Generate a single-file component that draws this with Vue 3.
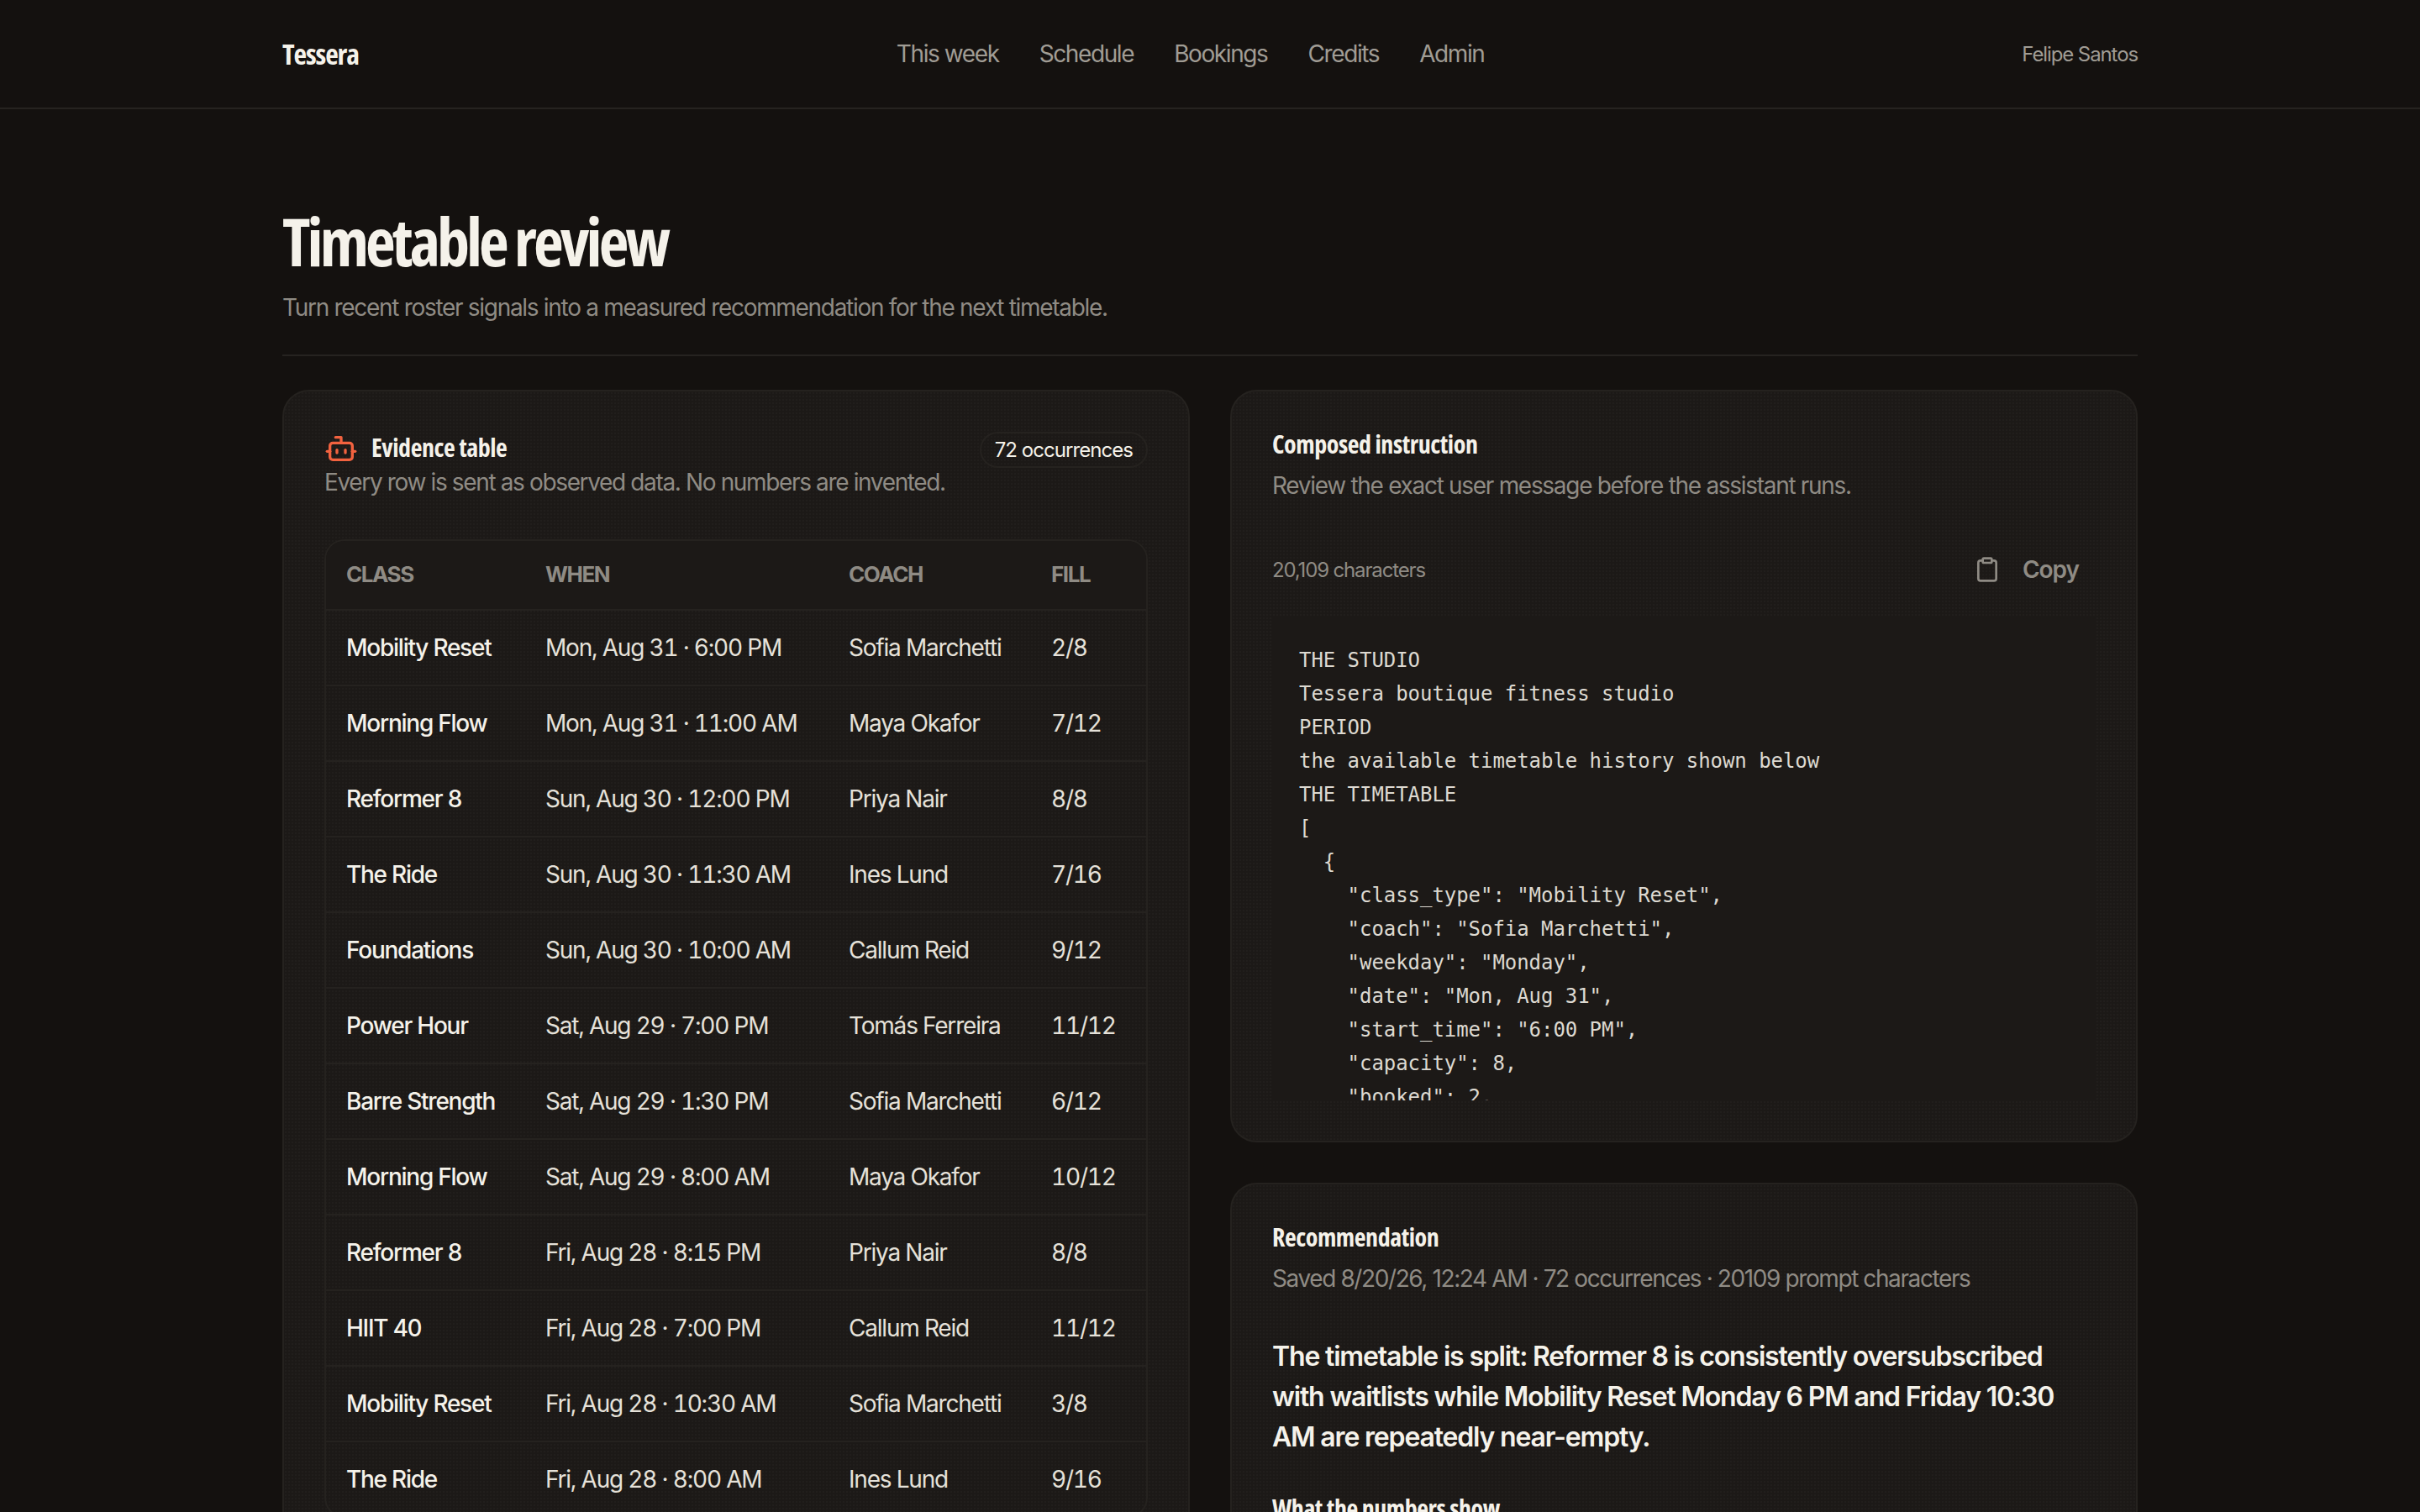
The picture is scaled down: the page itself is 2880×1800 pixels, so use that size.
<script setup>
const navItems = ['This week', 'Schedule', 'Bookings', 'Credits', 'Admin']

const rows = [
  ['Mobility Reset', 'Mon, Aug 31 · 6:00 PM', 'Sofia Marchetti', '2/8'],
  ['Morning Flow', 'Mon, Aug 31 · 11:00 AM', 'Maya Okafor', '7/12'],
  ['Reformer 8', 'Sun, Aug 30 · 12:00 PM', 'Priya Nair', '8/8'],
  ['The Ride', 'Sun, Aug 30 · 11:30 AM', 'Ines Lund', '7/16'],
  ['Foundations', 'Sun, Aug 30 · 10:00 AM', 'Callum Reid', '9/12'],
  ['Power Hour', 'Sat, Aug 29 · 7:00 PM', 'Tomás Ferreira', '11/12'],
  ['Barre Strength', 'Sat, Aug 29 · 1:30 PM', 'Sofia Marchetti', '6/12'],
  ['Morning Flow', 'Sat, Aug 29 · 8:00 AM', 'Maya Okafor', '10/12'],
  ['Reformer 8', 'Fri, Aug 28 · 8:15 PM', 'Priya Nair', '8/8'],
  ['HIIT 40', 'Fri, Aug 28 · 7:00 PM', 'Callum Reid', '11/12'],
  ['Mobility Reset', 'Fri, Aug 28 · 10:30 AM', 'Sofia Marchetti', '3/8'],
  ['The Ride', 'Fri, Aug 28 · 8:00 AM', 'Ines Lund', '9/16'],
]

const prompt = `THE STUDIO
Tessera boutique fitness studio
PERIOD
the available timetable history shown below
THE TIMETABLE
[
  {
    "class_type": "Mobility Reset",
    "coach": "Sofia Marchetti",
    "weekday": "Monday",
    "date": "Mon, Aug 31",
    "start_time": "6:00 PM",
    "capacity": 8,
    "booked": 2,
    "waitlist": 0
  },`
</script>

<template>
  <div class="page">
    <header class="topbar">
      <div class="topbar-inner">
        <div class="brand">Tessera</div>
        <nav class="nav">
          <a v-for="item in navItems" :key="item">{{ item }}</a>
        </nav>
        <div class="user">Felipe Santos</div>
      </div>
    </header>

    <main class="main">
      <div class="head">
        <h1>Timetable review</h1>
        <p>Turn recent roster signals into a measured recommendation for the next timetable.</p>
      </div>

      <div class="columns">
        <section class="card">
          <div class="evidence-head">
            <div>
              <h2 class="with-icon">
                <svg class="bot" width="40" height="40" viewBox="0 0 24 24" fill="none" stroke="#f2623f" stroke-width="2" stroke-linecap="round" stroke-linejoin="round">
                  <path d="M12 8V4H8" />
                  <rect x="4" y="8" width="16" height="12" rx="2" />
                  <path d="M2 14h2" />
                  <path d="M20 14h2" />
                  <path d="M15 13v2" />
                  <path d="M9 13v2" />
                </svg>
                <span>Evidence table</span>
              </h2>
              <p class="sub tight">Every row is sent as observed data. No numbers are invented.</p>
            </div>
            <span class="pill">72 occurrences</span>
          </div>

          <div class="table-wrap">
            <table>
              <colgroup>
                <col style="width: 237px">
                <col style="width: 361px">
                <col style="width: 241px">
                <col>
              </colgroup>
              <thead>
                <tr><th>CLASS</th><th>WHEN</th><th>COACH</th><th>FILL</th></tr>
              </thead>
              <tbody>
                <tr v-for="(r, i) in rows" :key="i">
                  <td class="cls">{{ r[0] }}</td>
                  <td>{{ r[1] }}</td>
                  <td>{{ r[2] }}</td>
                  <td>{{ r[3] }}</td>
                </tr>
              </tbody>
            </table>
          </div>
        </section>

        <div class="stack">
          <section class="card">
            <h2>Composed instruction</h2>
            <p class="sub">Review the exact user message before the assistant runs.</p>
            <div class="prompt-bar">
              <span class="count">20,109 characters</span>
              <button class="copy">
                <svg width="32" height="32" viewBox="0 0 24 24" fill="none" stroke="currentColor" stroke-width="2" stroke-linecap="round" stroke-linejoin="round">
                  <rect x="8" y="2" width="8" height="4" rx="1" />
                  <path d="M16 4h2a2 2 0 0 1 2 2v14a2 2 0 0 1-2 2H6a2 2 0 0 1-2-2V6a2 2 0 0 1 2-2h2" />
                </svg>
                Copy
              </button>
            </div>
            <pre class="prompt">{{ prompt }}</pre>
          </section>

          <section class="card">
            <h2>Recommendation</h2>
            <p class="sub saved">Saved 8/20/26, 12:24 AM · 72 occurrences · 20109 prompt characters</p>
            <p class="verdict">The timetable is split: Reformer 8 is consistently oversubscribed with waitlists while Mobility Reset Monday 6 PM and Friday 10:30 AM are repeatedly near-empty.</p>
            <h3>What the numbers show</h3>
          </section>
        </div>
      </div>
    </main>
  </div>
</template>

<style>
html, body {
  margin: 0;
  background: #14110f;
}
</style>

<style scoped>
.page {
  height: 100vh;
  overflow: hidden;
  background: #14110f;
  color: #f5f2ea;
  font-family: Inter, "Liberation Sans", sans-serif;
}
.topbar {
  height: 128px;
  border-bottom: 2px solid #262320;
}
.topbar-inner {
  width: 2208px;
  height: 100%;
  margin: 0 auto;
  display: flex;
  justify-content: space-between;
  align-items: center;
}
.brand {
  font-family: "Open Sans", sans-serif;
  font-stretch: 75%;
  font-weight: 700;
  font-size: 34px;
  letter-spacing: -1.1px;
}
.nav {
  display: flex;
  gap: 48px;
}
.nav a {
  font-size: 28px;
  color: #a09c94;
  letter-spacing: -1.4px;
}
.user {
  font-size: 24px;
  color: #a09c94;
  letter-spacing: -1.1px;
}
.main {
  width: 2208px;
  margin: 0 auto;
  padding-top: 116px;
}
.head {
  padding-bottom: 36px;
  border-bottom: 2px solid #262320;
  margin-bottom: 40px;
}
h1 {
  margin: 0;
  font-family: "Open Sans", sans-serif;
  font-stretch: 75%;
  font-size: 78px;
  line-height: 82px;
  font-weight: 700;
  letter-spacing: -3.9px;
}
.head p {
  margin: 18px 0 0;
  font-size: 28px;
  line-height: 40px;
  color: #8f8b84;
  letter-spacing: -1.3px;
}
.columns {
  display: grid;
  grid-template-columns: 1fr 1fr;
  gap: 48px;
  align-items: start;
}
.stack {
  display: flex;
  flex-direction: column;
  gap: 48px;
}
.card {
  background-color: #1c1917;
  background-image: radial-gradient(#211e1c 1px, transparent 1px);
  background-size: 4px 4px;
  border: 2px solid #25221f;
  border-radius: 32px;
  padding: 48px;
}
h2 {
  margin: 0;
  font-family: "Open Sans", sans-serif;
  font-stretch: 75%;
  font-size: 30px;
  line-height: 30px;
  font-weight: 700;
  letter-spacing: -0.45px;
}
.with-icon {
  display: flex;
  align-items: center;
  gap: 16px;
  height: 40px;
}
.with-icon span {
  margin-top: -2px;
}
.bot {
  flex: none;
}
.sub {
  margin: 14px 0 0;
  font-size: 28px;
  line-height: 40px;
  color: #8f8b84;
  letter-spacing: -1.3px;
}
.sub.tight {
  margin-top: 0;
  letter-spacing: -1.36px;
}
.sub.saved {
  letter-spacing: -1.4px;
}
.evidence-head {
  display: flex;
  justify-content: space-between;
  align-items: flex-start;
}
.pill {
  border: 2px solid #25221f;
  border-radius: 22px;
  padding: 0 16px;
  font-size: 24px;
  line-height: 39px;
  color: #f5f2ea;
  letter-spacing: -0.95px;
  white-space: nowrap;
}
.table-wrap {
  margin-top: 48px;
  border: 2px solid #25221f;
  border-radius: 24px;
  overflow: hidden;
}
table {
  width: 100%;
  border-collapse: collapse;
  table-layout: fixed;
  font-variant-numeric: tabular-nums;
}
thead {
  background: #1c1917;
}
th {
  height: 79px;
  padding: 0 24px 2px;
  text-align: left;
  font-size: 26px;
  font-weight: 700;
  color: #8f8b84;
  letter-spacing: -1.45px;
}
td {
  height: 88px;
  padding: 0 24px;
  font-size: 28px;
  color: #e5e1d9;
  letter-spacing: -1.2px;
  border-top: 2px solid #25221f;
  white-space: nowrap;
}
td.cls {
  color: #f5f2ea;
  font-weight: 500;
  letter-spacing: -1.25px;
}
.prompt-bar {
  margin-top: 40px;
  display: flex;
  justify-content: space-between;
  align-items: center;
  height: 80px;
}
.count {
  font-size: 24px;
  color: #8f8b84;
  letter-spacing: -1.15px;
}
.copy {
  display: flex;
  align-items: center;
  gap: 26px;
  background: none;
  border: 0;
  padding: 0 20px 0 0;
  font: 600 28px Inter, sans-serif;
  letter-spacing: -1px;
  color: #8f8b84;
}
.prompt {
  box-sizing: border-box;
  margin: 15px 0 0;
  height: 577px;
  overflow: hidden;
  padding: 33px 32px 0;
  background: #1c1917;
  font-family: "DejaVu Sans Mono", "Liberation Mono", monospace;
  font-size: 24px;
  line-height: 40px;
  letter-spacing: -0.05px;
  color: #ddd9d1;
}
.verdict {
  margin: 49px 0 0;
  font-size: 32px;
  line-height: 48px;
  font-weight: 600;
  letter-spacing: -1.17px;
}
h3 {
  margin: 43px 0 0;
  font-family: "Open Sans", sans-serif;
  font-stretch: 75%;
  font-size: 30px;
  line-height: 36px;
  font-weight: 700;
  letter-spacing: -0.45px;
}
</style>
